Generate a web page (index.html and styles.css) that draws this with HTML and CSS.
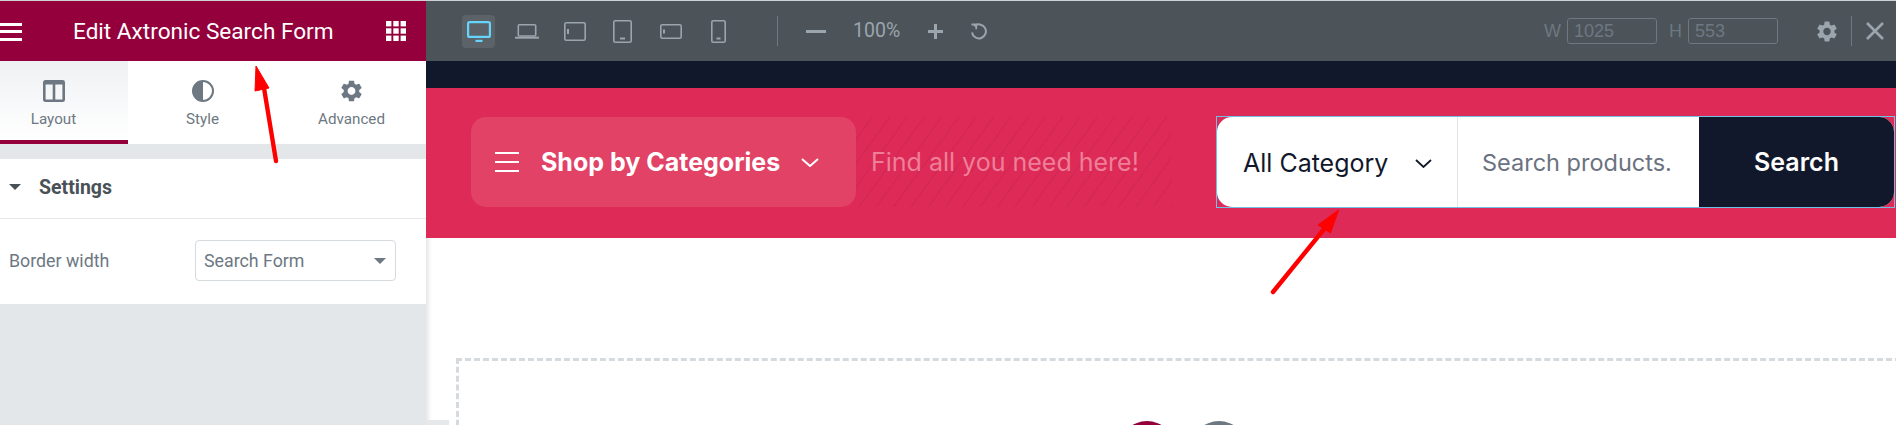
FILE: index.html
```html
<!DOCTYPE html>
<html lang="en">
<head>
    <meta charset="UTF-8">
    <meta name="viewport" content="width=device-width, initial-scale=1.0">
    <title>Edit Axtronic Search Form</title>
    <link rel="stylesheet" href="styles.css">
</head>
<body>
    <svg class="defs" width="0" height="0">
        <symbol id="gear" viewBox="2.4 1.8 19.2 20.4">
            <path d="M19.14 12.94c.04-.3.06-.61.06-.94 0-.32-.02-.64-.07-.94l2.03-1.58a.49.49 0 0 0 .12-.61l-1.92-3.32a.488.488 0 0 0-.59-.22l-2.39.96c-.5-.38-1.03-.7-1.62-.94l-.36-2.54a.484.484 0 0 0-.48-.41h-3.84c-.24 0-.43.17-.47.41l-.36 2.54c-.59.24-1.13.57-1.62.94l-2.39-.96c-.22-.08-.47 0-.59.22L2.74 8.87c-.12.21-.08.47.12.61l2.03 1.58c-.05.3-.09.63-.09.94s.02.64.07.94l-2.03 1.58a.49.49 0 0 0-.12.61l1.92 3.32c.12.22.37.29.59.22l2.39-.96c.5.38 1.03.7 1.62.94l.36 2.54c.05.24.24.41.48.41h3.84c.24 0 .44-.17.47-.41l.36-2.54c.59-.24 1.13-.56 1.62-.94l2.39.96c.22.08.47 0 .59-.22l1.92-3.32c.12-.22.07-.47-.12-.61l-2.01-1.58zM12 15.6c-1.98 0-3.6-1.62-3.6-3.6s1.62-3.6 3.6-3.6 3.6 1.62 3.6 3.6-1.62 3.6-3.6 3.6z"/>
        </symbol>
    </svg>

    <div id="editor">
        <aside id="panel">
            <header class="panel-header">
                <div class="burger"><span></span><span></span><span></span></div>
                <h1 class="panel-title">Edit Axtronic Search Form</h1>
                <svg class="apps" width="20" height="20" viewBox="0 0 20 20" fill="#fff">
                    <rect width="5.4" height="5.4"/><rect x="7.3" width="5.4" height="5.4"/><rect x="14.6" width="5.4" height="5.4"/>
                    <rect y="7.3" width="5.4" height="5.4"/><rect x="7.3" y="7.3" width="5.4" height="5.4"/><rect x="14.6" y="7.3" width="5.4" height="5.4"/>
                    <rect y="14.6" width="5.4" height="5.4"/><rect x="7.3" y="14.6" width="5.4" height="5.4"/><rect x="14.6" y="14.6" width="5.4" height="5.4"/>
                </svg>
            </header>

            <nav class="tabs">
                <div class="tab active">
                    <svg width="22" height="22" viewBox="0 0 22 22" fill="none" stroke="#6d7882" stroke-width="2.6">
                        <rect x="1.3" y="1.3" width="19.4" height="19.4" rx="1"/>
                        <path d="M11 1v20M1 3.2h20" />
                    </svg>
                    <span>Layout</span>
                </div>
                <div class="tab">
                    <svg width="22" height="22" viewBox="0 0 22 22">
                        <circle cx="11" cy="11" r="10" fill="none" stroke="#6d7882" stroke-width="2"/>
                        <path d="M11 1a10 10 0 0 0 0 20z" fill="#6d7882"/>
                    </svg>
                    <span>Style</span>
                </div>
                <div class="tab">
                    <svg width="21" height="22" fill="#6d7882"><use href="#gear"/></svg>
                    <span>Advanced</span>
                </div>
            </nav>

            <section class="settings">
                <div class="settings-head">
                    <i class="caret dark"></i>
                    <span>Settings</span>
                </div>
                <div class="control">
                    <label>Border width</label>
                    <div class="select">
                        <span>Search Form</span>
                        <i class="caret"></i>
                    </div>
                </div>
            </section>
        </aside>

        <main id="preview">
            <div class="toolbar">
                <div class="devices">
                    <button class="device active">
                        <svg width="24" height="21" viewBox="0 0 24 21" fill="none" stroke="#66d4fb" stroke-width="2.2"><rect x="1.1" y="1.1" width="21.8" height="14.8" rx="1.5"/><path d="M8.5 20h7" stroke-width="2.4"/></svg>
                    </button>
                    <button class="device">
                        <svg width="24" height="15" viewBox="0 0 24 15" fill="none" stroke="#9aa5ae" stroke-width="1.6"><rect x="3.3" y=".8" width="17.4" height="11.2" rx="1"/><path d="M0 13.7h24" stroke-width="2"/></svg>
                    </button>
                    <button class="device">
                        <svg width="22" height="19" viewBox="0 0 22 19" fill="none" stroke="#9aa5ae" stroke-width="1.6"><rect x=".8" y=".8" width="20.4" height="17.4" rx="1.5"/><path d="M4 7v5" stroke-width="2"/></svg>
                    </button>
                    <button class="device">
                        <svg width="19" height="23" viewBox="0 0 19 23" fill="none" stroke="#9aa5ae" stroke-width="1.6"><rect x=".8" y=".8" width="17.4" height="21.4" rx="1.5"/><path d="M7 18.5h5" stroke-width="2"/></svg>
                    </button>
                    <button class="device">
                        <svg width="22" height="15" viewBox="0 0 22 15" fill="none" stroke="#9aa5ae" stroke-width="1.6"><rect x=".8" y=".8" width="20.4" height="13.4" rx="1.5"/><path d="M4 5.5v4" stroke-width="2"/></svg>
                    </button>
                    <button class="device">
                        <svg width="15" height="23" viewBox="0 0 15 23" fill="none" stroke="#9aa5ae" stroke-width="1.6"><rect x=".8" y=".8" width="13.4" height="21.4" rx="1.5"/><path d="M5.5 18.5h4" stroke-width="2"/></svg>
                    </button>
                </div>
                <div class="sep sep-zoom"></div>
                <div class="minus"></div>
                <span class="zoom-value">100%</span>
                <svg class="plus" width="15" height="15" viewBox="0 0 15 15" fill="#9aa5ae"><path d="M6 0h3v6h6v3H9v6H6V9H0V6h6z"/></svg>
                <svg class="reset" width="17" height="17" viewBox="0 0 17 17" fill="none" stroke="#9aa5ae" stroke-width="2"><path d="M4.2 3.2A7 7 0 1 1 2 9.5"/><path d="M1.5 1.5h4.7v4.7" stroke-width="1.8" stroke-linejoin="miter"/></svg>

                <div class="sizes">
                    <span class="size-label">W</span>
                    <div class="size-input">1025</div>
                    <span class="size-label size-h">H</span>
                    <div class="size-input">553</div>
                    <svg class="size-gear" width="20" height="21" fill="#9aa5ae"><use href="#gear"/></svg>
                    <div class="sep"></div>
                    <svg class="close" width="18" height="18" viewBox="0 0 18 18" stroke="#9aa5ae" stroke-width="2.6"><path d="M1 1l16 16M17 1L1 17"/></svg>
                </div>
            </div>

            <div class="canvas">
                <div class="strip"></div>
                <div class="band">
                    <div class="cat-button">
                        <div class="cat-burger"><span></span><span></span><span></span></div>
                        <span class="cat-title">Shop by Categories</span>
                        <svg width="18" height="9" viewBox="0 0 18 9" fill="none" stroke="#fff" stroke-width="2"><path d="M1 1l8 7 8-7"/></svg>
                    </div>
                    <div class="promo">Find all you need here!</div>
                    <form class="search-form">
                        <div class="search-inner">
                            <div class="search-cat">
                                <span>All Category</span>
                                <svg width="17" height="9" viewBox="0 0 17 9" fill="none" stroke="#12182b" stroke-width="1.8"><path d="M1 1l7.5 7L16 1"/></svg>
                            </div>
                            <div class="search-field">Search products.</div>
                            <div class="search-btn">Search</div>
                        </div>
                    </form>
                </div>
                <div class="page-body">
                    <div class="add-section">
                        <div class="round crimson"></div>
                        <div class="round grey"></div>
                    </div>
                </div>
                <div class="panel-toggle"></div>
            </div>
        </main>
    </div>

    <!-- annotation arrows -->
    <svg class="arrows" width="1896" height="425" viewBox="0 0 1896 425" fill="#f00" stroke="#f00">
        <path d="M276 161L264 88" stroke-width="4.4" stroke-linecap="round"/>
        <path d="M256 66L255 91L269 88z" stroke-width="1"/>
        <path d="M1273 292L1325 228" stroke-width="4.4" stroke-linecap="round"/>
        <path d="M1338.6 210L1318 225L1330.5 233z" stroke-width="1"/>
    </svg>
</body>
</html>
```

FILE: styles.css
```css
* {
    box-sizing: border-box;
}
html, body {
    margin: 0;
    padding: 0;
    height: 425px;
    overflow: hidden;
}
body {
    font-family: Roboto, Arial, sans-serif;
    background: #fff;
    border-top: 1px solid #cfd2d4;
    position: relative;
}
.defs {
    position: absolute;
}
#editor {
    display: flex;
    height: 424px;
}

/* left panel */
#panel {
    width: 426px;
    flex: none;
    background: #e4e7ea;
    overflow: hidden;
}
.panel-header {
    height: 60px;
    background: #93003c;
    color: #fff;
    display: flex;
    align-items: center;
}
.burger {
    width: 22px;
    display: flex;
    flex-direction: column;
    gap: 4.5px;
    margin-top: 1px;
}
.burger span {
    height: 3px;
    background: #fff;
}
.panel-title {
    margin: 0 0 0 51px;
    font-size: 22.6px;
    font-weight: 400;
    width: 313px;
    white-space: nowrap;
}
.apps {
    flex: none;
}
.tabs {
    display: flex;
    height: 83px;
    margin-left: -21px;
    background: #fff;
}
.tab {
    width: 149px;
    display: flex;
    flex-direction: column;
    align-items: center;
    padding-top: 19px;
    color: #6d7882;
    font-size: 15.2px;
}
.tab span {
    margin-top: 8px;
}
.tab.active {
    background: linear-gradient(#eff1f3, #fff);
    border-bottom: 4px solid #93003c;
}
.settings {
    margin-top: 15px;
    background: #fff;
}
.settings-head {
    height: 60px;
    border-bottom: 1px solid #e6e9ec;
    display: flex;
    align-items: center;
    padding: 0 0 3px 9px;
    color: #495157;
    font-size: 19.5px;
    font-weight: 700;
}
.settings-head span {
    margin-left: 18px;
}
.caret {
    width: 0;
    height: 0;
    border-left: 6px solid transparent;
    border-right: 6px solid transparent;
    border-top: 6px solid #6d7882;
}
.caret.dark {
    border-top-color: #495157;
}
.control {
    height: 85px;
    display: flex;
    align-items: center;
    justify-content: space-between;
    padding: 0 30px 2px 9px;
    color: #6d7882;
    font-size: 17.8px;
}
.select {
    width: 201px;
    height: 41px;
    border: 1px solid #d5dadf;
    border-radius: 4px;
    display: flex;
    align-items: center;
    justify-content: space-between;
    padding: 0 9px 0 8px;
}

/* top bar */
#preview {
    flex: 1;
    min-width: 0;
    overflow: hidden;
}
.toolbar {
    height: 60px;
    background: #4c5359;
    display: flex;
    align-items: center;
    padding: 0 12px 0 36px;
}
.devices {
    display: flex;
    gap: 15px;
}
.device {
    width: 33px;
    height: 33px;
    padding: 0;
    border: none;
    background: none;
    border-radius: 4px;
    display: flex;
    align-items: center;
    justify-content: center;
}
.device.active {
    background: #5b6268;
}
.sep {
    width: 1px;
    height: 30px;
    background: #6d7882;
}
.sep-zoom {
    margin-left: 42px;
}
.minus {
    width: 20px;
    height: 3px;
    background: #9aa5ae;
    margin-left: 28px;
}
.zoom-value {
    margin-left: 27px;
    width: 48px;
    color: #9aa5ae;
    font-size: 19.5px;
    margin-bottom: 2px;
}
.plus {
    margin-left: 27px;
}
.reset {
    margin-left: 27px;
}
.sizes {
    margin-left: auto;
    display: flex;
    align-items: center;
    color: #6d7882;
    font-family: "Liberation Sans", Arial, sans-serif;
    font-size: 18px;
}
.size-input {
    width: 90px;
    height: 26px;
    border: 1px solid #6d7882;
    border-radius: 3px;
    margin-left: 6px;
    padding-left: 6px;
    line-height: 24px;
}
.size-h {
    margin-left: 12px;
}
.size-gear {
    margin-left: 39px;
    margin-right: 14px;
}
.close {
    margin-left: 14px;
}

/* page being edited */
.canvas {
    height: 364px;
    position: relative;
}
.strip {
    height: 27px;
    background: #12182b;
}
.band {
    height: 150px;
    background: #dd2a57;
    display: flex;
    align-items: flex-start;
    padding: 29px 1px 0 45px;
    font-family: Inter, "Liberation Sans", sans-serif;
    font-size: 25px;
}
.cat-button {
    width: 385px;
    height: 90px;
    flex: none;
    background: #e24266;
    border-radius: 15px;
    padding-left: 24px;
    display: flex;
    align-items: center;
    color: #fff;
    font-weight: 700;
    position: relative;
    z-index: 1;
}
.cat-burger {
    width: 24px;
    display: flex;
    flex-direction: column;
    gap: 7px;
}
.cat-burger span {
    height: 2px;
    background: #fff;
}
.cat-title {
    margin-left: 22px;
    width: 260px;
    white-space: nowrap;
}
.promo {
    width: 316px;
    height: 90px;
    flex: none;
    padding-left: 15px;
    display: flex;
    align-items: center;
    color: #ee7f99;
    background: repeating-linear-gradient(126deg, transparent 0 12.5px, rgba(0, 0, 0, 0.045) 12.5px 14px);
}
.search-form {
    margin: -1px 0 0 44px;
    width: 679px;
    height: 92px;
    border: 1px solid #6ec1e4;
}
.search-inner {
    height: 100%;
    border-radius: 15px;
    overflow: hidden;
    display: flex;
    background: #fff;
}
.search-cat {
    width: 241px;
    padding: 2px 25px 0 26px;
    border-right: 1px solid #e5e5e5;
    display: flex;
    align-items: center;
    justify-content: space-between;
    color: #12182b;
}
.search-field {
    width: 241px;
    padding-left: 24px;
    display: flex;
    align-items: center;
    color: #6b7280;
    font-size: 23.5px;
    white-space: nowrap;
}
.search-btn {
    flex: 1;
    background: #12182b;
    color: #fff;
    font-weight: 600;
    display: flex;
    align-items: center;
    justify-content: center;
}
.page-body {
    height: 187px;
    padding: 120px 0 0 30px;
    box-shadow: inset 6px 0 5px -4px rgba(0, 0, 0, 0.12);
}
.add-section {
    width: 1454px;
    height: 200px;
    border: 3px dashed #d5dadf;
    display: flex;
    justify-content: center;
    gap: 16px;
    padding-top: 60px;
}
.round {
    width: 56px;
    height: 56px;
    border-radius: 50%;
}
.crimson {
    background: #93003c;
}
.grey {
    background: #6d7882;
}
.panel-toggle {
    position: absolute;
    left: 0;
    bottom: 0;
    width: 23px;
    height: 5px;
    background: #e6e9ec;
}
.arrows {
    position: absolute;
    left: 0;
    top: -1px;
    pointer-events: none;
}
```
